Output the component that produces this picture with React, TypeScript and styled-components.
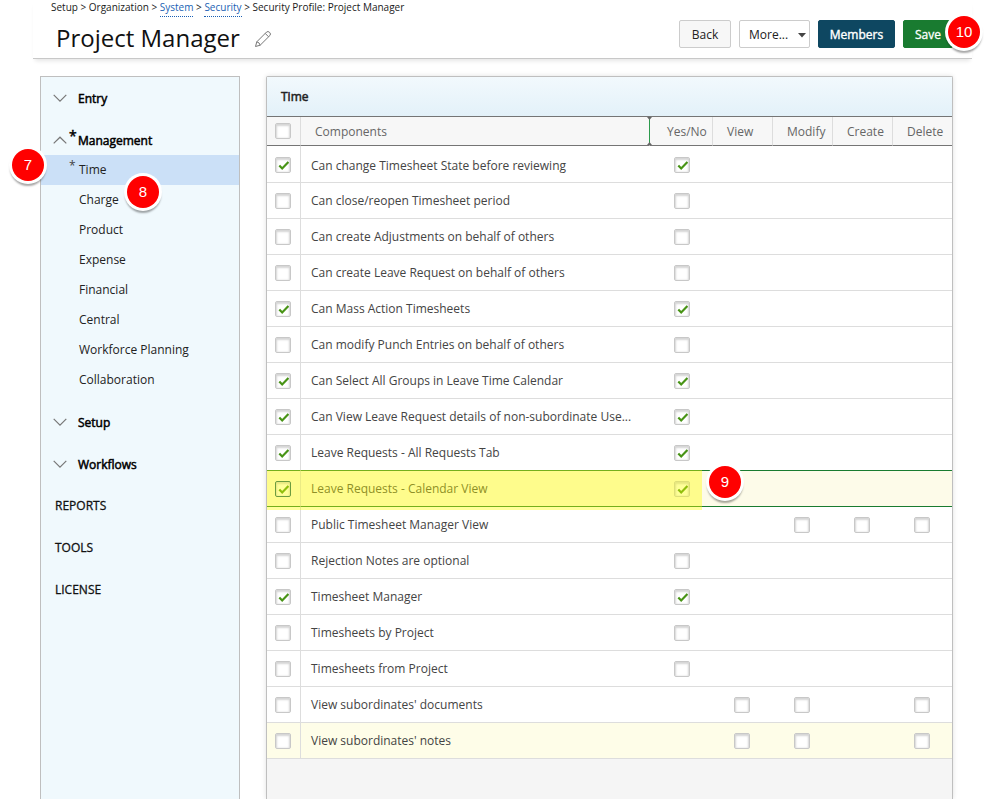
import React from "react";
import styled, { createGlobalStyle, css } from "styled-components";

const GlobalStyle = createGlobalStyle`
  *, *::before, *::after { box-sizing: border-box; }
  html, body, #root { height: 100%; }
  body {
    margin: 0;
    overflow: hidden;
    background: #fff;
    color: #1a1a1a;
    font-family: "Open Sans", "Noto Sans", sans-serif;
    font-size: 12px;
  }
`;

const Page = styled.div`
  display: flex;
  flex-direction: column;
  height: 100vh;
  overflow: hidden;
`;

const Header = styled.header`
  margin: 0 21px 0 33px;
  padding: 0 19px 0 18px;
  border-bottom: 1px solid #c8c8c8;
  box-shadow: 0 4px 4px -2px rgba(0, 0, 0, 0.1);
`;

const Breadcrumb = styled.nav`
  height: 14px;
  line-height: 14px;
  font-size: 10px;
  white-space: nowrap;
`;

const Crumb = styled.a`
  display: inline-block;
  height: 17px;
  color: #1a5fb4;
  text-decoration: none;
  border-bottom: 1px dotted #1a5fb4;
`;

const TitleRow = styled.div`
  display: flex;
  justify-content: space-between;
  align-items: flex-start;
`;

const TitleGroup = styled.div`
  display: flex;
  align-items: center;
  gap: 14px;
  padding: 4px 0 0 5px;
`;

const Title = styled.h1`
  margin: 0;
  font-size: 24px;
  line-height: 40px;
  font-weight: 400;
  color: #111;
  white-space: nowrap;
`;

const IconButton = styled.button`
  display: flex;
  padding: 2px 0 0;
  border: 0;
  background: none;
  cursor: pointer;
`;

const Actions = styled.div`
  display: flex;
  gap: 8px;
  padding-top: 6px;
`;

const buttonBase = css`
  height: 28px;
  padding: 0;
  border-radius: 2px;
  font-family: inherit;
  font-size: 12px;
  cursor: pointer;
`;

const tones = {
  plain: css`background: #f7f7f7; border: 1px solid #ccc; color: #222;`,
  navy: css`background: #0e4761; border: 1px solid #0e4761; color: #fff; -webkit-text-stroke: 0.4px #fff;`,
  green: css`background: #197b30; border: 1px solid #197b30; color: #fff; -webkit-text-stroke: 0.3px #fff;`,
};

const Button = styled.button<{ $tone: keyof typeof tones; $width: number }>`
  ${buttonBase}
  width: ${(p) => p.$width}px;
  ${(p) => tones[p.$tone]}
`;

const SelectWrap = styled.div`
  position: relative;
`;

const MoreSelect = styled.select`
  ${buttonBase}
  width: 71px;
  padding: 0 0 0 9px;
  appearance: none;
  border: 1px solid #ccc;
  background: #fff;
  color: #222;
`;

const Caret = styled.svg`
  position: absolute;
  right: 4px;
  top: 13px;
  pointer-events: none;
`;

const Anchor = styled.div`
  position: relative;
`;

const Badge = styled.span<{ $left?: number; $right?: number; $top: number }>`
  position: absolute;
  z-index: 2;
  top: ${(p) => p.$top}px;
  ${(p) => (p.$left !== undefined ? `left: ${p.$left}px;` : `right: ${p.$right}px;`)}
  width: 32px;
  height: 32px;
  border-radius: 50%;
  background: #f00;
  box-shadow: 0 0 0 3px #fff, 0 3px 2px 2px rgba(0, 0, 0, 0.35);
  color: #fff;
  font: 15px/32px "Liberation Sans", Arial, sans-serif;
  text-align: center;
`;

const Body = styled.div`
  flex: 1;
  min-height: 0;
  display: grid;
  grid-template-columns: 200px 1fr;
  gap: 26px;
  padding: 17px 40px 0;
`;

const Sidebar = styled.nav`
  background: #f0f9fd;
  border: 1px solid #bfbfbf;
  border-bottom: 0;
`;

const Section = styled.section`
  padding: 6px 0;
`;

const SectionButton = styled.button`
  position: relative;
  display: flex;
  align-items: center;
  gap: 11px;
  width: 100%;
  height: 30px;
  padding: 0 0 0 12px;
  border: 0;
  background: none;
  color: #000;
  font-family: inherit;
  font-size: 12px;
  text-align: left;
  -webkit-text-stroke: 0.5px #000;
  cursor: pointer;
`;

const SectionLink = styled.a`
  display: block;
  padding-left: 14px;
  line-height: 30px;
  color: #111;
  text-decoration: none;
  -webkit-text-stroke: 0.3px #111;
`;

const Star = styled.span`
  position: absolute;
  left: 28px;
  top: 1px;
  font-size: 14px;
  line-height: 20px;
`;

const SubList = styled.ul`
  margin: 0;
  padding: 0;
  list-style: none;
`;

const SubItem = styled.li<{ $active?: boolean }>`
  position: relative;
  background: ${(p) => (p.$active ? "#cbe0f7" : "transparent")};
`;

const SubLink = styled.a`
  display: block;
  padding-left: 38px;
  line-height: 30px;
  color: #222;
  text-decoration: none;
`;

const SubStar = styled(Star)`
  font-size: 12px;
  color: #444;
`;

const Panel = styled.main`
  display: flex;
  flex-direction: column;
  min-width: 0;
  border: 1px solid #bfbfbf;
  border-bottom: 0;
  border-radius: 2px 2px 0 0;
  background: #f5f5f5;
  box-shadow: 0 0 5px rgba(0, 0, 0, 0.12);
`;

const PanelTitle = styled.h2`
  margin: 0;
  padding-left: 14px;
  border-bottom: 1px solid #757575;
  background: linear-gradient(#f2f9fd, #e3f1f9);
  color: #222;
  font-size: 12px;
  line-height: 39px;
  font-weight: 400;
  -webkit-text-stroke: 0.5px #222;
`;

const Table = styled.table`
  width: 100%;
  table-layout: fixed;
  border-collapse: separate;
  border-spacing: 0;
  color: #444;
`;

const Col = styled.col<{ $width?: number }>`
  width: ${(p) => (p.$width ? `${p.$width}px` : "auto")};
`;

const HeadCell = styled.th<{ $pad: number }>`
  position: relative;
  height: 29px;
  padding: 0 0 0 ${(p) => p.$pad}px;
  border-right: 1px solid #ddd;
  border-bottom: 1px solid #757575;
  background: #f7f7f7;
  color: #666;
  font-weight: 400;
  text-align: left;
  &:last-child { border-right: 0; }
`;

const Resizer = styled.svg`
  position: absolute;
  right: -4px;
  top: 0;
  z-index: 1;
`;

const Row = styled.tr<{ $tint?: string }>`
  position: relative;
  background: ${(p) => p.$tint ?? "#fff"};
`;

const Cell = styled.td<{ $pad: number; $line: string; $divider?: boolean }>`
  height: 36px;
  padding: 0 0 0 ${(p) => p.$pad}px;
  border-bottom: 1px solid ${(p) => p.$line};
  border-right: ${(p) => (p.$divider ? "1px solid #ddd" : "0")};
  white-space: nowrap;
  tr:first-child > & { height: 37px; padding-top: 2px; }
`;

const tick =
  "url(\"data:image/svg+xml,%3Csvg xmlns='http://www.w3.org/2000/svg' viewBox='0 0 16 16'%3E%3Cpath d='M4.3 8.4 7.2 11.4 13.4 5' fill='none' stroke='%23489416' stroke-width='2.2'/%3E%3C/svg%3E\")";

const Check = styled.input<{ $focus?: boolean }>`
  display: block;
  width: 16px;
  height: 16px;
  margin: 0;
  appearance: none;
  border: 1px solid ${(p) => (p.$focus ? "#0a5a6a" : "#c8c8c8")};
  border-radius: 2px;
  background-color: #fff;
  box-shadow: inset 0 1px 2px 1px rgba(0, 0, 0, 0.17);
  background-origin: border-box;
  background-size: 16px 16px;
  &:checked { background-image: ${tick}; }
`;

const Highlight = styled.span`
  position: absolute;
  z-index: 1;
  inset: -1px 250px -3px 0;
  background: rgba(255, 255, 0, 0.4);
  pointer-events: none;
`;

const Chevron = ({ up }: { up?: boolean }) => (
  <svg width="14" height="8" viewBox="0 0 14 8" fill="none" stroke="#777" strokeWidth="1.2" aria-hidden="true">
    <path d={up ? "M.7 7.4 7 1.2l6.3 6.2" : "M.7.9 7 7.1 13.3.9"} />
  </svg>
);

type Access = "Yes/No" | "View" | "Modify" | "Create" | "Delete";

const accessColumns: { name: Access; width: number; headPad: number; pad: number }[] = [
  { name: "Yes/No", width: 63, headPad: 17, pad: 24 },
  { name: "View", width: 60, headPad: 14, pad: 21 },
  { name: "Modify", width: 60, headPad: 14, pad: 21 },
  { name: "Create", width: 60, headPad: 14, pad: 21 },
  { name: "Delete", width: 59, headPad: 14, pad: 21 },
];

type Permission = { name: string; on?: boolean; boxes?: Access[]; selected?: boolean; hovered?: boolean };

const permissions: Permission[] = [
  { name: "Can change Timesheet State before reviewing", on: true },
  { name: "Can close/reopen Timesheet period" },
  { name: "Can create Adjustments on behalf of others" },
  { name: "Can create Leave Request on behalf of others" },
  { name: "Can Mass Action Timesheets", on: true },
  { name: "Can modify Punch Entries on behalf of others" },
  { name: "Can Select All Groups in Leave Time Calendar", on: true },
  { name: "Can View Leave Request details of non-subordinate Use...", on: true },
  { name: "Leave Requests - All Requests Tab", on: true },
  { name: "Leave Requests - Calendar View", on: true, selected: true },
  { name: "Public Timesheet Manager View", boxes: ["Modify", "Create", "Delete"] },
  { name: "Rejection Notes are optional" },
  { name: "Timesheet Manager", on: true },
  { name: "Timesheets by Project" },
  { name: "Timesheets from Project" },
  { name: "View subordinates' documents", boxes: ["View", "Modify", "Delete"] },
  { name: "View subordinates' notes", boxes: ["View", "Modify", "Delete"], hovered: true },
];

const managementItems = [
  "Time", "Charge", "Product", "Expense", "Financial", "Central", "Workforce Planning", "Collaboration",
];

export default function App() {
  return (
    <>
      <GlobalStyle />
      <Page>
        <Header>
          <Breadcrumb aria-label="Breadcrumb">
            Setup &gt; Organization &gt; <Crumb href="#system">System</Crumb> &gt;{" "}
            <Crumb href="#security">Security</Crumb> &gt; Security Profile: Project Manager
          </Breadcrumb>
          <TitleRow>
            <TitleGroup>
              <Title>Project Manager</Title>
              <IconButton aria-label="Edit name">
                <svg width="18" height="18" viewBox="0 0 18 18" fill="none" stroke="#777" strokeWidth="1" strokeLinejoin="round">
                  <path d="M1.5 16.5 2.8 11.8 12.6 2Q14 .8 15.6 2.4T16 5.4L6.2 15.2ZM2.8 11.8Q5.6 12.4 6.2 15.2M11.2 3.4l3.4 3.4" />
                </svg>
              </IconButton>
            </TitleGroup>
            <Actions>
              <Button $tone="plain" $width={52}>Back</Button>
              <SelectWrap>
                <MoreSelect aria-label="More actions">
                  <option>More...</option>
                </MoreSelect>
                <Caret width="8" height="5" viewBox="0 0 8 5" aria-hidden="true">
                  <path d="M0 0h8L4 4.5z" fill="#444" />
                </Caret>
              </SelectWrap>
              <Button $tone="navy" $width={77}>Members</Button>
              <Anchor>
                <Button $tone="green" $width={50}>Save</Button>
                <Badge $right={-27} $top={-4}>10</Badge>
              </Anchor>
            </Actions>
          </TitleRow>
        </Header>
        <Body>
          <Sidebar aria-label="Security sections">
            <Section>
              <SectionButton><Chevron />Entry</SectionButton>
            </Section>
            <Section>
              <SectionButton aria-expanded="true">
                <Chevron up />
                <Star>*</Star>
                Management
              </SectionButton>
              <SubList>
                {managementItems.map((item) => (
                  <SubItem key={item} $active={item === "Time"}>
                    {item === "Time" && <SubStar>*</SubStar>}
                    <SubLink href={`#${item}`}>{item}</SubLink>
                    {item === "Time" && <Badge $left={-29} $top={-6}>7</Badge>}
                    {item === "Charge" && <Badge $left={86} $top={-9}>8</Badge>}
                  </SubItem>
                ))}
              </SubList>
            </Section>
            <Section>
              <SectionButton><Chevron />Setup</SectionButton>
            </Section>
            <Section>
              <SectionButton><Chevron />Workflows</SectionButton>
            </Section>
            {["REPORTS", "TOOLS", "LICENSE"].map((name) => (
              <Section key={name}>
                <SectionLink href={`#${name}`}>{name}</SectionLink>
              </Section>
            ))}
          </Sidebar>
          <Panel>
            <PanelTitle>Time</PanelTitle>
            <Table>
              <colgroup>
                <Col $width={34} />
                <Col />
                {accessColumns.map((c) => <Col key={c.name} $width={c.width} />)}
              </colgroup>
              <thead>
                <tr>
                  <HeadCell $pad={8}><Check type="checkbox" aria-label="Select all" /></HeadCell>
                  <HeadCell $pad={14}>
                    Components
                    <Resizer width="7" height="28" viewBox="0 0 7 28" aria-hidden="true">
                      <path d="M3.5 0v28" stroke="#2c9a4c" />
                      <path d="M1 0h5L3.5 3zM1 28h5L3.5 25z" fill="#666" />
                    </Resizer>
                  </HeadCell>
                  {accessColumns.map((c) => <HeadCell key={c.name} $pad={c.headPad}>{c.name}</HeadCell>)}
                </tr>
              </thead>
              <tbody>
                {permissions.map((p, i) => {
                  const line = p.selected || permissions[i + 1]?.selected ? "#197b30" : "#ddd";
                  const boxes = p.boxes ?? ["Yes/No"];
                  return (
                    <Row key={p.name} $tint={p.selected ? "#fdfbe9" : p.hovered ? "#fefde8" : undefined}>
                      <Cell $pad={8} $line={line} $divider>
                        <Check type="checkbox" defaultChecked={p.on} $focus={p.selected} aria-label={`Select ${p.name}`} />
                        {p.selected && <Highlight />}
                        {p.selected && <Badge $right={211} $top={-5}>9</Badge>}
                      </Cell>
                      <Cell $pad={10} $line={line}>{p.name}</Cell>
                      {accessColumns.map((c) => (
                        <Cell key={c.name} $pad={c.pad} $line={line}>
                          {boxes.includes(c.name) && (
                            <Check type="checkbox" defaultChecked={p.on} aria-label={`${p.name}: ${c.name}`} />
                          )}
                        </Cell>
                      ))}
                    </Row>
                  );
                })}
              </tbody>
            </Table>
          </Panel>
        </Body>
      </Page>
    </>
  );
}
